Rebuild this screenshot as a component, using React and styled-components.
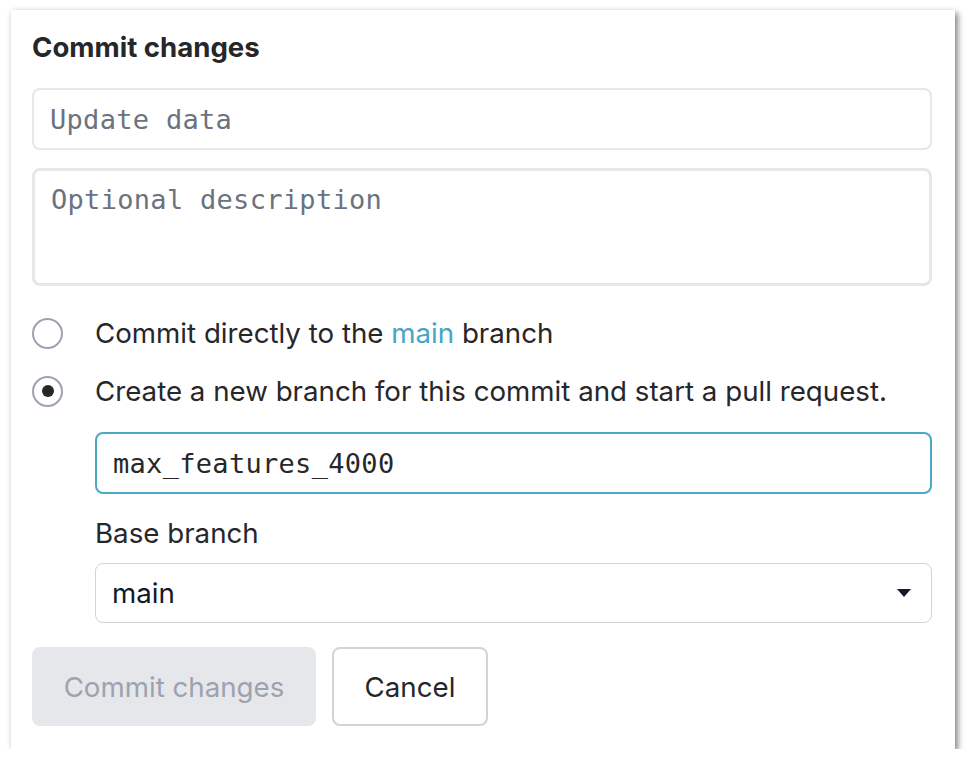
import styled, { createGlobalStyle } from 'styled-components';

const GlobalStyle = createGlobalStyle`
  html, body {
    margin: 0;
    padding: 0;
    background: #ffffff;
  }
  * {
    box-sizing: border-box;
  }
`;

const Panel = styled.div`
  margin: 10px 0 0 11px;
  width: 944px;
  height: 739px;
  padding: 20px 23px 23px 21px;
  background: #ffffff;
  box-shadow: 3px 3px 6px rgba(0, 0, 0, 0.45), 0 0 6px rgba(0, 0, 0, 0.08);
  display: flex;
  flex-direction: column;
  font-family: 'Inter', 'Liberation Sans', sans-serif;
  color: #27272a;
`;

const Title = styled.div`
  font-size: 27.6px;
  font-weight: 700;
  line-height: 34px;
`;

const TextInput = styled.div`
  margin-top: ${(p) => p.$top || 0}px;
  height: ${(p) => p.$height || 62}px;
  border: ${(p) => (p.$focus ? '2px solid #4ba8c6' : `${p.$border || 2}px solid #e5e7eb`)};
  border-radius: 8px;
  padding: ${(p) => p.$padTop || 15}px 16px 0 16px;
  font-family: 'DejaVu Sans Mono', 'Liberation Mono', monospace;
  font-size: 27px;
  line-height: 30px;
  color: ${(p) => (p.$placeholder ? '#6b7280' : '#27272a')};
  letter-spacing: 0.3px;
`;

const Options = styled.div`
  margin-top: 32px;
  display: flex;
  flex-direction: column;
  gap: 28px;
`;

const OptionRow = styled.label`
  display: flex;
  align-items: center;
  gap: 32px;
  height: 30px;
  font-size: 27.7px;
  line-height: 30px;
`;

const Radio = styled.span`
  width: 31px;
  height: 31px;
  border: 2px solid #9ca3af;
  border-radius: 50%;
  display: flex;
  align-items: center;
  justify-content: center;
  flex-shrink: 0;

  &::after {
    content: '';
    width: 12px;
    height: 12px;
    border-radius: 50%;
    background: ${(p) => (p.$checked ? '#27272a' : 'transparent')};
  }
`;

const Link = styled.span`
  color: #46a6c4;
`;

const BranchFields = styled.div`
  margin-left: 63px;
  margin-top: 26px;
  display: flex;
  flex-direction: column;
`;

const FieldLabel = styled.div`
  margin-top: 22px;
  font-size: 27.7px;
  line-height: 34px;
`;

const Select = styled.div`
  margin-top: 13px;
  height: 60px;
  border: 1.5px solid #d4d4d8;
  border-radius: 8px;
  padding: 0 20px 0 16px;
  display: flex;
  align-items: center;
  justify-content: space-between;
  font-size: 27.7px;
  color: #111827;
`;

const Caret = styled.span`
  width: 0;
  height: 0;
  border-left: 7px solid transparent;
  border-right: 7px solid transparent;
  border-top: 8px solid #111827;
`;

const Actions = styled.div`
  margin-top: 24px;
  display: flex;
  gap: 16px;
`;

const Button = styled.button`
  height: 79px;
  padding: 0;
  border-radius: 8px;
  font-family: 'Inter', 'Liberation Sans', sans-serif;
  font-size: 27.7px;
  cursor: pointer;
  background: ${(p) => (p.disabled ? '#e5e7eb' : '#ffffff')};
  color: ${(p) => (p.disabled ? '#9ca3af' : '#27272a')};
  border: ${(p) => (p.disabled ? '0' : '2px solid #d4d4d8')};
  width: ${(p) => p.$width}px;
`;

export default function App() {
  return (
    <>
      <GlobalStyle />
      <Panel>
        <Title>Commit changes</Title>
        <TextInput $top={24} $placeholder>Update data</TextInput>
        <TextInput $top={18} $height={118} $border={3} $placeholder $padTop={14}>
          Optional description
        </TextInput>
        <Options>
          <OptionRow>
            <Radio />
            <span>
              Commit directly to the <Link>main</Link> branch
            </span>
          </OptionRow>
          <OptionRow>
            <Radio $checked />
            <span>Create a new branch for this commit and start a pull request.</span>
          </OptionRow>
        </Options>
        <BranchFields>
          <TextInput $focus>max_features_4000</TextInput>
          <FieldLabel>Base branch</FieldLabel>
          <Select>
            <span>main</span>
            <Caret />
          </Select>
        </BranchFields>
        <Actions>
          <Button disabled $width={284}>Commit changes</Button>
          <Button $width={156}>Cancel</Button>
        </Actions>
      </Panel>
    </>
  );
}
